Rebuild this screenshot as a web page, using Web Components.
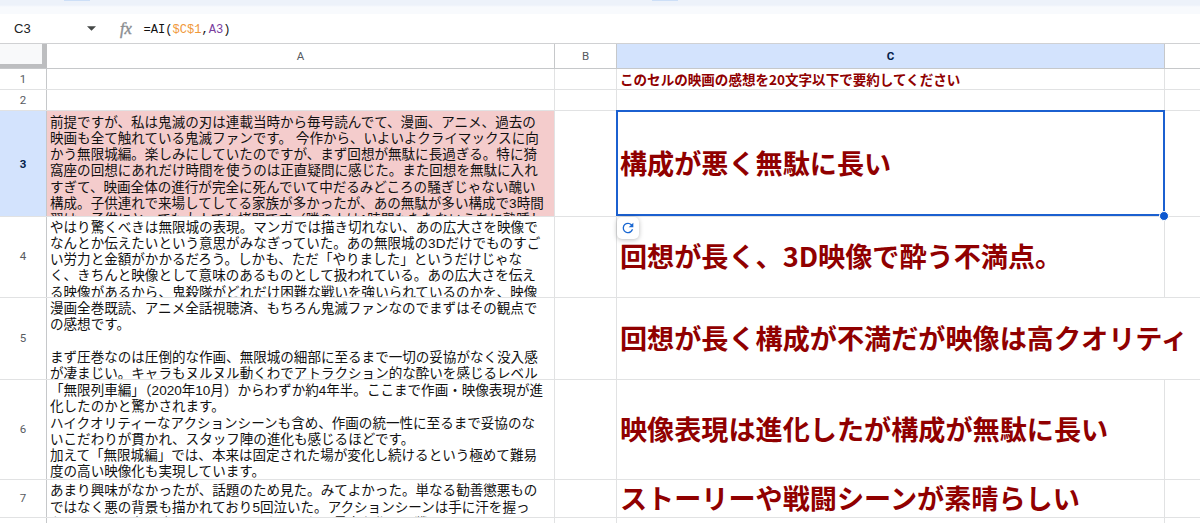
<!DOCTYPE html>
<html lang="ja"><head><meta charset="utf-8"><title>Sheet</title>
<style>html,body{margin:0;height:523px;overflow:hidden;background:#fff}body{font-family:"Liberation Sans","Noto Sans CJK JP",sans-serif;color:#111}</style></head><body>
<sheet-app></sheet-app>
<script>
class FormulaBar extends HTMLElement{constructor(){super();this.attachShadow({mode:'open'}).innerHTML=`<style>
:host{display:flex;align-items:center;height:29px;border-bottom:1px solid #d0d1d3;background:#fff;box-sizing:content-box}
.name{width:73px;padding-left:14px;font-size:13px;color:#202124}
.fx{font:italic 400 16.5px/20px "Liberation Serif",serif;color:#8a8d91;-webkit-text-stroke:.4px #8a8d91;margin-left:24px;width:23.500px;padding-top:1px}
code{font:12.1px "Liberation Mono",monospace;color:#111;white-space:pre;padding-top:2px}
.o{color:#f0983a}.p{color:#7b3f9e}
</style><span class="name">C3</span><svg width="9" height="5" viewBox="0 0 9 5"><path d="M0 .3h9L4.500 4.800z" fill="#444746"/></svg><span class="fx">fx</span><code>=AI(<span class="o">$C$1</span>,<span class="p">A3</span>)</code>`}}
customElements.define('formula-bar',FormulaBar);

class SheetRow extends HTMLElement{constructor(){super();this.attachShadow({mode:'open'}).innerHTML=`<style>
:host{display:grid;grid-template-columns:47px 508px 62px 548px 1fr;box-sizing:border-box;height:var(--h);border-bottom:1px solid #e1e2e3}
:host([head]){border-bottom-color:#c6c8ca}
</style><slot></slot>`}
connectedCallback(){this.style.setProperty('--h',this.getAttribute('h')+'px')}}
customElements.define('sheet-row',SheetRow);

class SheetCell extends HTMLElement{constructor(){super();this.attachShadow({mode:'open'}).innerHTML=`<style>
:host{display:flex;box-sizing:border-box;min-width:0;border-right:1px solid #e1e2e3;position:relative;white-space:pre;font-size:13.55px;line-height:16.25px}
:host([kind=label]){align-items:center;justify-content:center;font:11.500px Roboto,"Liberation Sans",sans-serif;color:#575b5f;border-color:#c6c8ca}
:host([active]){background:#d3e3fd;font-weight:700;color:#041e49}
:host([kind=text]){overflow:hidden;padding:var(--top,3px) 0 0 3px;min-height:0}
:host([pink]){background:#f4cccc}
:host([kind=result]){align-items:center;padding:0 0 0 3px;font-family:"Noto Sans CJK JP",sans-serif;font-weight:700;color:#900000}
:host([big]){font-size:27.13px;line-height:34px;padding-bottom:2px}
:host([spill]),:host([last]){border-right-color:transparent}
:host([corner]){background:#f8f9fa;border-right:5px solid #bdbec0;border-bottom:4px solid #bdbec0}
</style><slot></slot>`}}
customElements.define('sheet-cell',SheetCell);

class CellSelection extends HTMLElement{constructor(){super();this.attachShadow({mode:'open'}).innerHTML=`<style>
:host{position:absolute;left:-1px;top:-1px;right:-1px;bottom:0;border:2px solid #1b60d0;box-sizing:border-box;z-index:2}
i{position:absolute;right:-6px;bottom:-7px;width:8px;height:8px;border-radius:50%;background:#0b57d0;border:1px solid #fff}
span{position:absolute;left:-1px;top:105px;width:22px;height:22px;border-radius:5px;background:#fff;box-shadow:0 1px 5px #0004;display:flex;align-items:center;justify-content:center}
</style><i></i><span><svg width="16" height="16" viewBox="0 0 24 24"><path fill="#1967d2" d="M17.650 6.350A7.950 7.950 0 0 0 12 4a8 8 0 1 0 7.730 10h-2.080A6 6 0 1 1 12 6c1.660 0 3.140.69 4.220 1.780L13 11h7V4z"/></svg></span>`}}
customElements.define('cell-selection',CellSelection);

class SheetApp extends HTMLElement{constructor(){super();
const row=(n,h,a,c,o={})=>`<sheet-row h="${h}"><sheet-cell kind="label" ${o.active?'active':''} style="padding-bottom:${n>3?2:0}px">${n}</sheet-cell><sheet-cell kind="text" style="--top:${o.top||4}px" ${o.active?'pink':''}>${a}</sheet-cell><sheet-cell></sheet-cell><sheet-cell kind="result" ${n>2?'big':''} ${o.spill?'spill':''}>${c}${o.active?'<cell-selection></cell-selection>':''}</sheet-cell><sheet-cell last></sheet-cell></sheet-row>`;
this.attachShadow({mode:'open'}).innerHTML=`<style>
:host{display:flex;flex-direction:column;height:523px;overflow:hidden}
.strip{height:14px;flex:none;background:linear-gradient(#edf2fa 0 5px,#f8fafd 7px);display:flex;gap:562px;padding-left:64px;box-sizing:border-box}
.strip b{width:26px;height:1px;background:#cddff7}
formula-bar,sheet-row{flex:none}
</style><div class="strip"><b></b><b></b></div><formula-bar></formula-bar>
<sheet-row head h="25"><sheet-cell kind="label" corner></sheet-cell><sheet-cell kind="label">A</sheet-cell><sheet-cell kind="label">B</sheet-cell><sheet-cell kind="label" active>C</sheet-cell><sheet-cell last></sheet-cell></sheet-row>
${row(1,21,'','このセルの映画の感想を20文字以下で要約してください')}
${row(2,21,'','')}
${row(3,106,`前提ですが、私は鬼滅の刃は連載当時から毎号読んでて、漫画、アニメ、過去の
映画も全て触れている鬼滅ファンです。 今作から、いよいよクライマックスに向
かう無限城編。楽しみにしていたのですが、まず回想が無駄に長過ぎる。特に猗
窩座の回想にあれだけ時間を使うのは正直疑問に感じた。また回想を無駄に入れ
すぎて、映画全体の進行が完全に死んでいて中だるみどころの騒ぎじゃない醜い
構成。子供連れで来場してしてる家族が多かったが、あの無駄が多い構成で3時間
習は、子供にとっても大人でも拷問です（隣の人は1時間もたたないうちに熟睡し`,'構成が悪く無駄に長い',{active:1,top:3.5})}
${row(4,81,`やはり驚くべきは無限城の表現。マンガでは描き切れない、あの広大さを映像で
なんとか伝えたいという意思がみなぎっていた。あの無限城の3Dだけでものすご
い労力と金額がかかるだろう。しかも、ただ「やりました」というだけじゃな
く、きちんと映像として意味のあるものとして扱われている。あの広大さを伝え
る映像があるから、鬼殺隊がどれだけ困難な戦いを強いられているのかを、映像`,'回想が長く、3D映像で酔う不満点。',{top:2.5})}
${row(5,82,`漫画全巻既読、アニメ全話視聴済、もちろん鬼滅ファンなのでまずはその観点で
の感想です。

まず圧巻なのは圧倒的な作画、無限城の細部に至るまで一切の妥協がなく没入感
が凄まじい。キャラもヌルヌル動くわでアトラクション的な酔いを感じるレベル`,'回想が長く構成が不満だが映像は高クオリティ',{spill:1,top:3})}
${row(6,100,`「無限列車編」（2020年10月）からわずか約4年半。ここまで作画・映像表現が進
化したのかと驚かされます。
ハイクオリティーなアクションシーンも含め、作画の統一性に至るまで妥協のな
いこだわりが貫かれ、スタッフ陣の進化も感じるほどです。
加えて「無限城編」では、本来は固定された場が変化し続けるという極めて難易
度の高い映像化も実現しています。`,'映像表現は進化したが構成が無駄に長い',{top:3})}
${row(7,38,`あまり興味がなかったが、話題のため見た。みてよかった。単なる勧善懲悪もの
ではなく悪の背景も描かれており5回泣いた。アクションシーンは手に汗を握っ
たし、とても良い映画だと思いました。これは最高な作品、戦闘`,'ストーリーや戦闘シーンが素晴らしい',{top:3.4})}
${row('',30,'','')}`}}
customElements.define('sheet-app',SheetApp);
</script></body></html>
